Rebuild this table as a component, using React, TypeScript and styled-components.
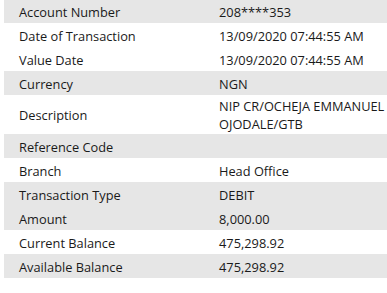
import React from "react";
import styled, { createGlobalStyle } from "styled-components";

const GlobalStyle = createGlobalStyle`
  html, body {
    margin: 0;
    padding: 0;
    background: #fff;
    overflow: hidden;
  }
  body {
    font-family: "Open Sans", "Liberation Sans", sans-serif;
  }
`;

const DetailsTable = styled.div`
  width: 398px;
  margin: -1px 0 0 4px;
  display: flex;
  flex-direction: column;
`;

const DetailRow = styled.div<{ $shaded: boolean }>`
  display: grid;
  grid-template-columns: 215px 1fr;
  align-items: center;
  min-height: 24px;
  padding: 1px 0;
  box-sizing: border-box;
  background: ${(p) => (p.$shaded ? "#e6e6e6" : "#fff")};
`;

const Label = styled.div`
  padding-left: 15px;
  padding-top: 1px;
  color: #1a1a1a;
  font-size: 12.8px;
  line-height: 18px;
`;

const Value = styled.div`
  padding-top: 1px;
  color: #1a1a1a;
  font-size: 12.8px;
  line-height: 18px;
`;

const rows: { label: string; value: string; shaded: boolean }[] = [
  { label: "Account Number", value: "208****353", shaded: true },
  { label: "Date of Transaction", value: "13/09/2020 07:44:55 AM", shaded: false },
  { label: "Value Date", value: "13/09/2020 07:44:55 AM", shaded: false },
  { label: "Currency", value: "NGN", shaded: true },
  { label: "Description", value: "NIP CR/OCHEJA EMMANUEL OJODALE/GTB", shaded: false },
  { label: "Reference Code", value: "", shaded: true },
  { label: "Branch", value: "Head Office", shaded: false },
  { label: "Transaction Type", value: "DEBIT", shaded: true },
  { label: "Amount", value: "8,000.00", shaded: true },
  { label: "Current Balance", value: "475,298.92", shaded: false },
  { label: "Available Balance", value: "475,298.92", shaded: true },
];

export default function App() {
  return (
    <>
      <GlobalStyle />
      <DetailsTable>
        {rows.map((r) => (
          <DetailRow key={r.label} $shaded={r.shaded}>
            <Label>{r.label}</Label>
            <Value>{r.value}</Value>
          </DetailRow>
        ))}
      </DetailsTable>
    </>
  );
}
